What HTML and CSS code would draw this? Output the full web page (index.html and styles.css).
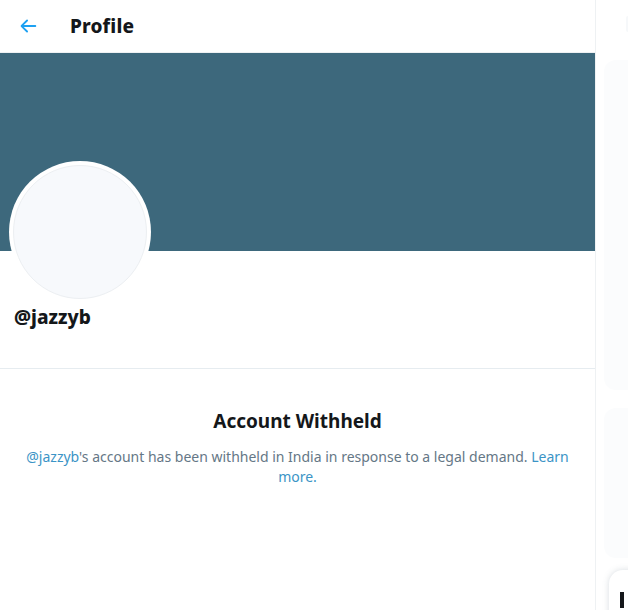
FILE: index.html
```html
<!DOCTYPE html>
<html>
<head>
<meta charset="utf-8">
<link rel="stylesheet" href="styles.css">
</head>
<body>
<div class="layout">
  <main class="primary">
    <header class="topbar">
      <svg class="back" viewBox="0 0 24 24" width="22" height="22"><path d="M20 11H7.414l4.293-4.293a1 1 0 0 0-1.414-1.414l-6 6a1 1 0 0 0 0 1.414l6 6a1 1 0 0 0 1.414-1.414L7.414 13H20a1 1 0 1 0 0-2z" fill="#1da1f2"/></svg>
      <h1 class="title">Profile</h1>
    </header>
    <div class="banner"></div>
    <section class="identity">
      <div class="avatar"><div class="avatar-inner"></div></div>
      <div class="handle">@jazzyb</div>
    </section>
    <section class="withheld">
      <h2 class="wh-title">Account Withheld</h2>
      <p class="wh-text"><a class="link">@jazzyb</a>'s account has been withheld in India in response to a legal demand. <a class="link">Learn more.</a></p>
    </section>
  </main>
  <aside class="sidebar">
    <div class="search"></div>
    <div class="panel panel-a"></div>
    <div class="panel panel-b"></div>
    <div class="drawer"><span class="drawer-mark"></span></div>
  </aside>
</div>
</body>
</html>
```
FILE: styles.css
```css
html, body {
  margin: 0;
  padding: 0;
  background: #ffffff;
  font-family: "Noto Sans", "Open Sans", sans-serif;
  overflow: hidden;
}
.layout {
  display: flex;
  width: 628px;
  height: 610px;
}
.primary {
  width: 595px;
  flex: none;
  border-right: 1px solid #eef1f3;
  display: flex;
  flex-direction: column;
}
.topbar {
  display: flex;
  align-items: center;
  padding-left: 17px;
  border-bottom: 1px solid #eef1f3;
  box-sizing: border-box;
  height: 53px;
}
.back {
  width: 22px;
  height: 22px;
}
.title {
  margin: 0 0 0 31px;
  font-size: 19px;
  font-weight: 800;
  color: #14171a;
  letter-spacing: 0.15px;
}
.banner {
  height: 198px;
  background: #3d687c;
}
.identity {
  position: relative;
  height: 117px;
  border-bottom: 1px solid #e6ecf0;
  padding: 0 14px;
}
.avatar {
  position: absolute;
  left: 9px;
  top: -90px;
  width: 142px;
  height: 142px;
  border-radius: 50%;
  background: #ffffff;
  display: flex;
  align-items: center;
  justify-content: center;
}
.avatar-inner {
  width: 134px;
  height: 134px;
  border-radius: 50%;
  background: #f7f9fc;
  border: 1px solid #eceff2;
  box-sizing: border-box;
}
.handle {
  padding-top: 53px;
  font-size: 19px;
  font-weight: 800;
  color: #14171a;
}
.withheld {
  padding: 39px 20px 0;
  text-align: center;
}
.wh-title {
  margin: 0;
  font-size: 19px;
  font-weight: 700;
  color: #14171a;
}
.wh-text {
  margin: 13px 0 0;
  font-size: 14px;
  line-height: 20px;
  color: #657786;
}
.link {
  color: #3b94c6;
}
.sidebar {
  flex: 1;
  position: relative;
  padding-left: 8px;
}
.search {
  height: 16px;
  margin: 16px 0 0 22px;
  background: #f6f8fa;
  border-radius: 4px 0 0 4px;
}
.panel {
  background: #fbfcfd;
  border-radius: 12px 0 0 12px;
}
.panel-a {
  margin-top: 28px;
  height: 330px;
}
.panel-b {
  margin-top: 18px;
  height: 150px;
}
.drawer {
  position: absolute;
  left: 13px;
  top: 570px;
  width: 40px;
  height: 50px;
  background: #ffffff;
  border-radius: 14px 0 0 0;
  box-shadow: 0 0 6px rgba(101, 119, 134, 0.25);
}
.drawer-mark {
  position: absolute;
  left: 11px;
  top: 22px;
  width: 4px;
  height: 16px;
  background: #14171a;
}
```
